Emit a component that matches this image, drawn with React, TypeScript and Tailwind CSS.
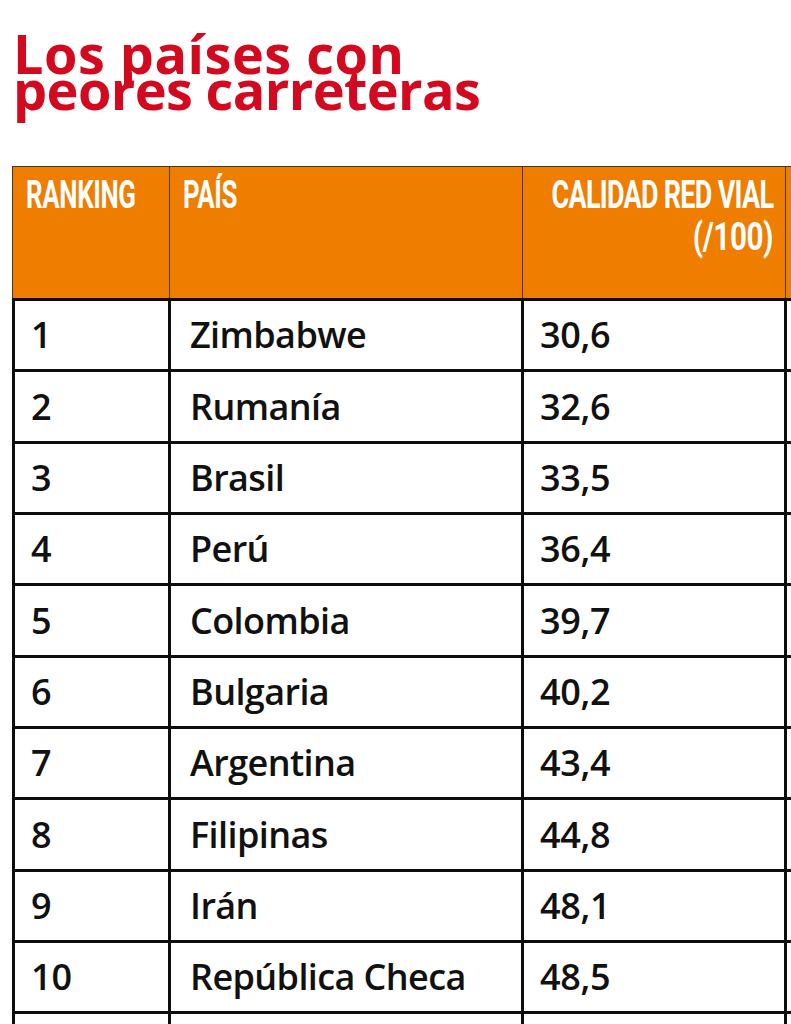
const rows = [
  { rank: "1", country: "Zimbabwe", score: "30,6" },
  { rank: "2", country: "Rumanía", score: "32,6" },
  { rank: "3", country: "Brasil", score: "33,5" },
  { rank: "4", country: "Perú", score: "36,4" },
  { rank: "5", country: "Colombia", score: "39,7" },
  { rank: "6", country: "Bulgaria", score: "40,2" },
  { rank: "7", country: "Argentina", score: "43,4" },
  { rank: "8", country: "Filipinas", score: "44,8" },
  { rank: "9", country: "Irán", score: "48,1" },
  { rank: "10", country: "República Checa", score: "48,5" },
  { rank: "", country: "", score: "" },
];

export default function App() {
  return (
    <div className="w-[791px] h-[1024px] overflow-hidden bg-white">
      {/* Title */}
      <h1 className="pt-[35px] pl-[13px] font-['Open_Sans',sans-serif] font-bold text-[54px] leading-[36px] text-[#d3091f]">
        <span className="tracking-[0.5px]">Los países con</span>
        <br />
        <span className="tracking-[-0.6px]">peores carreteras</span>
      </h1>

      <div className="mt-[59px] ml-[12px] w-[1000px]">
        {/* Header, condensed by squeezing the glyphs */}
        <div className="flex h-[132px] bg-[#ef7d00] border-t border-[#4a3520] text-white font-['Roboto',sans-serif] font-bold text-[38px] leading-[42px] tracking-[-0.5px]">
          <div className="w-[158px] border-l border-r border-[#4a3520] pl-[13px] pt-[7px]">
            <span className="inline-block whitespace-nowrap origin-left scale-x-[0.68]">RANKING</span>
          </div>
          <div className="w-[353px] border-r border-[#4a3520] pl-[13px] pt-[7px]">
            <span className="inline-block whitespace-nowrap origin-left scale-x-[0.68]">PAÍS</span>
          </div>
          <div className="w-[263px] border-r border-[#4a3520] pr-[12px] pt-[7px] flex flex-col items-end">
            <span className="inline-block whitespace-nowrap origin-right scale-x-[0.71] tracking-[-1px]">CALIDAD RED VIAL</span>
            <span className="inline-block whitespace-nowrap origin-right scale-x-[0.78]">(/100)</span>
          </div>
          <div className="flex-1" />
        </div>

        {/* Body */}
        <div className="border-t-[3px] border-[#0d0d0d] font-['Open_Sans',sans-serif] font-semibold text-[36px] text-[#111]">
          {rows.map((r, i) => (
            <div key={i} className="flex h-[71.35px] border-b-[3px] border-[#0d0d0d]">
              <div className="w-[159px] border-l-[3px] border-r-[3px] border-[#0d0d0d] pl-[16px] flex items-center">
                {r.rank}
              </div>
              <div className="w-[353px] border-r-[3px] border-[#0d0d0d] pl-[19px] flex items-center tracking-[-0.6px]">
                {r.country}
              </div>
              <div className="w-[263px] border-r-[3px] border-[#0d0d0d] pl-[16px] flex items-center tracking-[-0.3px]">
                {r.score}
              </div>
              <div className="flex-1" />
            </div>
          ))}
        </div>
      </div>
    </div>
  );
}
